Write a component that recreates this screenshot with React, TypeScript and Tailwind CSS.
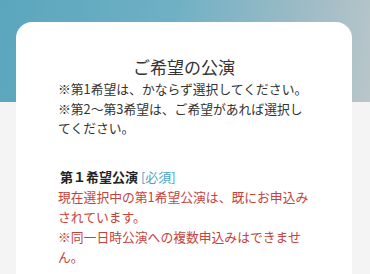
export default function App() {
  return (
    <div className="relative h-[274px] w-[370px] overflow-hidden bg-[#f4f4f4] font-['Noto_Sans_CJK_JP',sans-serif]">
      {/* header band */}
      <div className="absolute inset-x-0 top-0 h-[102px] bg-[linear-gradient(100deg,#5aa6bd_0%,#6fb0c4_45%,#9fbcc6_80%,#b9c6ca_100%)]" />

      <div className="relative pl-4 pr-[18px] pt-[22px]">
        <div className="rounded-[16px] bg-white px-[42px] pb-8 pt-[33px]">
          <h2 className="text-center text-[17px] leading-[24px] text-[#333]">ご希望の公演</h2>
          <div className="whitespace-nowrap text-[12.8px] leading-[19.5px] text-[#333]">
            <p>※第1希望は、かならず選択してください。</p>
            <p>
              ※第2〜第3希望は、ご希望があれば選択し
              <br />
              てください。
            </p>
          </div>

          <div className="mt-[29px]">
            <p className="pl-[2px] text-[13px] font-bold leading-[20px] text-[#222]">
              第１希望公演 <span className="font-normal text-[#4aa3c2]">[必須]</span>
            </p>
            <div className="whitespace-nowrap text-[12.8px] leading-[20px] text-[#c4443c]">
              <p>
                現在選択中の第1希望公演は、既にお申込み
                <br />
                されています。
              </p>
              <p>
                ※同一日時公演への複数申込みはできませ
                <br />
                ん。
              </p>
            </div>
          </div>
        </div>
      </div>
    </div>
  );
}
